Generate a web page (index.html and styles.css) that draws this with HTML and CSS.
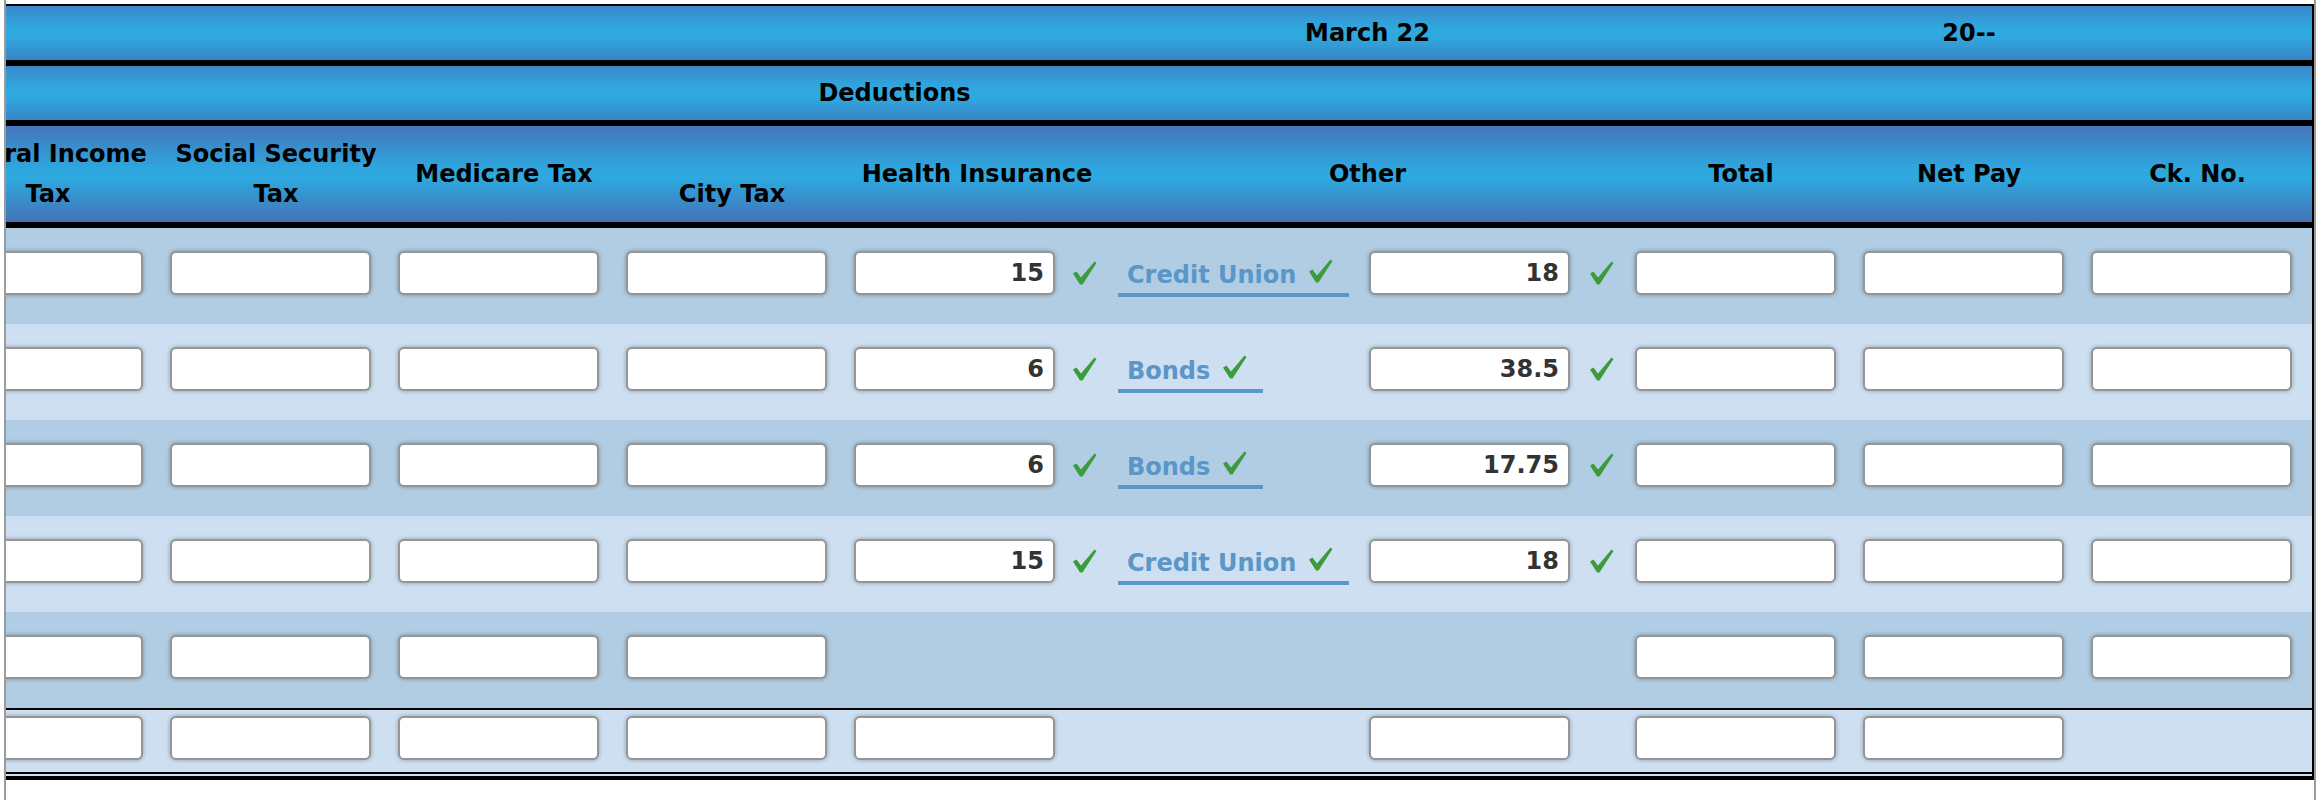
FILE: index.html
```html
<!DOCTYPE html>
<html lang="en">
<head>
<meta charset="utf-8">
<title>Payroll Register</title>
<link rel="stylesheet" href="styles.css">
</head>
<body>
<div class="frame">
  <div class="sheet">
    <div class="grid">
      <div class="row bar">
        <div class="bcell span-other">March 22</div>
        <div class="bcell span-net">20--</div>
      </div>
      <div class="row bar">
        <div class="bcell span-ded">Deductions</div>
      </div>
      <div class="row head">
        <div class="hcell"><div class="stack"><span class="line shift">Federal Income</span><span class="line">Tax</span></div></div>
        <div class="hcell">Social Security Tax</div>
        <div class="hcell">Medicare Tax</div>
        <div class="hcell"><span class="low">City Tax</span></div>
        <div class="hcell span-health">Health Insurance</div>
        <div class="hcell span-other">Other</div>
        <div class="hcell">Total</div>
        <div class="hcell">Net Pay</div>
        <div class="hcell">Ck. No.</div>
      </div>

      <div class="row body dark">
        <div class="cell"><input class="box" type="text" value=""></div>
        <div class="cell"><input class="box" type="text" value=""></div>
        <div class="cell"><input class="box" type="text" value=""></div>
        <div class="cell"><input class="box" type="text" value=""></div>
        <div class="cell"><input class="box" type="text" value="15"></div>
        <div class="cell chk1"><svg class="ck" viewBox="0 0 24 24" width="24" height="24"><path d="M0 12.5 L3.5 10.5 L8 16.5 L21.5 0.5 L23.5 2 L9.5 23.5 L7 23.5 Z"/></svg></div>
        <div class="cell lnk"><a class="link" href="#">Credit Union<svg class="ck in" viewBox="0 0 24 24" width="24" height="24"><path d="M0 12.5 L3.5 10.5 L8 16.5 L21.5 0.5 L23.5 2 L9.5 23.5 L7 23.5 Z"/></svg></a></div>
        <div class="cell"><input class="box" type="text" value="18"></div>
        <div class="cell chk2"><svg class="ck" viewBox="0 0 24 24" width="24" height="24"><path d="M0 12.5 L3.5 10.5 L8 16.5 L21.5 0.5 L23.5 2 L9.5 23.5 L7 23.5 Z"/></svg></div>
        <div class="cell"><input class="box" type="text" value=""></div>
        <div class="cell"><input class="box" type="text" value=""></div>
        <div class="cell"><input class="box" type="text" value=""></div>
      </div>

      <div class="row body light">
        <div class="cell"><input class="box" type="text" value=""></div>
        <div class="cell"><input class="box" type="text" value=""></div>
        <div class="cell"><input class="box" type="text" value=""></div>
        <div class="cell"><input class="box" type="text" value=""></div>
        <div class="cell"><input class="box" type="text" value="6"></div>
        <div class="cell chk1"><svg class="ck" viewBox="0 0 24 24" width="24" height="24"><path d="M0 12.5 L3.5 10.5 L8 16.5 L21.5 0.5 L23.5 2 L9.5 23.5 L7 23.5 Z"/></svg></div>
        <div class="cell lnk"><a class="link" href="#">Bonds<svg class="ck in" viewBox="0 0 24 24" width="24" height="24"><path d="M0 12.5 L3.5 10.5 L8 16.5 L21.5 0.5 L23.5 2 L9.5 23.5 L7 23.5 Z"/></svg></a></div>
        <div class="cell"><input class="box" type="text" value="38.5"></div>
        <div class="cell chk2"><svg class="ck" viewBox="0 0 24 24" width="24" height="24"><path d="M0 12.5 L3.5 10.5 L8 16.5 L21.5 0.5 L23.5 2 L9.5 23.5 L7 23.5 Z"/></svg></div>
        <div class="cell"><input class="box" type="text" value=""></div>
        <div class="cell"><input class="box" type="text" value=""></div>
        <div class="cell"><input class="box" type="text" value=""></div>
      </div>

      <div class="row body dark">
        <div class="cell"><input class="box" type="text" value=""></div>
        <div class="cell"><input class="box" type="text" value=""></div>
        <div class="cell"><input class="box" type="text" value=""></div>
        <div class="cell"><input class="box" type="text" value=""></div>
        <div class="cell"><input class="box" type="text" value="6"></div>
        <div class="cell chk1"><svg class="ck" viewBox="0 0 24 24" width="24" height="24"><path d="M0 12.5 L3.5 10.5 L8 16.5 L21.5 0.5 L23.5 2 L9.5 23.5 L7 23.5 Z"/></svg></div>
        <div class="cell lnk"><a class="link" href="#">Bonds<svg class="ck in" viewBox="0 0 24 24" width="24" height="24"><path d="M0 12.5 L3.5 10.5 L8 16.5 L21.5 0.5 L23.5 2 L9.5 23.5 L7 23.5 Z"/></svg></a></div>
        <div class="cell"><input class="box" type="text" value="17.75"></div>
        <div class="cell chk2"><svg class="ck" viewBox="0 0 24 24" width="24" height="24"><path d="M0 12.5 L3.5 10.5 L8 16.5 L21.5 0.5 L23.5 2 L9.5 23.5 L7 23.5 Z"/></svg></div>
        <div class="cell"><input class="box" type="text" value=""></div>
        <div class="cell"><input class="box" type="text" value=""></div>
        <div class="cell"><input class="box" type="text" value=""></div>
      </div>

      <div class="row body light">
        <div class="cell"><input class="box" type="text" value=""></div>
        <div class="cell"><input class="box" type="text" value=""></div>
        <div class="cell"><input class="box" type="text" value=""></div>
        <div class="cell"><input class="box" type="text" value=""></div>
        <div class="cell"><input class="box" type="text" value="15"></div>
        <div class="cell chk1"><svg class="ck" viewBox="0 0 24 24" width="24" height="24"><path d="M0 12.5 L3.5 10.5 L8 16.5 L21.5 0.5 L23.5 2 L9.5 23.5 L7 23.5 Z"/></svg></div>
        <div class="cell lnk"><a class="link" href="#">Credit Union<svg class="ck in" viewBox="0 0 24 24" width="24" height="24"><path d="M0 12.5 L3.5 10.5 L8 16.5 L21.5 0.5 L23.5 2 L9.5 23.5 L7 23.5 Z"/></svg></a></div>
        <div class="cell"><input class="box" type="text" value="18"></div>
        <div class="cell chk2"><svg class="ck" viewBox="0 0 24 24" width="24" height="24"><path d="M0 12.5 L3.5 10.5 L8 16.5 L21.5 0.5 L23.5 2 L9.5 23.5 L7 23.5 Z"/></svg></div>
        <div class="cell"><input class="box" type="text" value=""></div>
        <div class="cell"><input class="box" type="text" value=""></div>
        <div class="cell"><input class="box" type="text" value=""></div>
      </div>

      <div class="row body dark ruled">
        <div class="cell"><input class="box" type="text" value=""></div>
        <div class="cell"><input class="box" type="text" value=""></div>
        <div class="cell"><input class="box" type="text" value=""></div>
        <div class="cell"><input class="box" type="text" value=""></div>
        <div class="cell"></div>
        <div class="cell"></div>
        <div class="cell"></div>
        <div class="cell"></div>
        <div class="cell"></div>
        <div class="cell"><input class="box" type="text" value=""></div>
        <div class="cell"><input class="box" type="text" value=""></div>
        <div class="cell"><input class="box" type="text" value=""></div>
      </div>

      <div class="row body light totals">
        <div class="cell"><input class="box" type="text" value=""></div>
        <div class="cell"><input class="box" type="text" value=""></div>
        <div class="cell"><input class="box" type="text" value=""></div>
        <div class="cell"><input class="box" type="text" value=""></div>
        <div class="cell"><input class="box" type="text" value=""></div>
        <div class="cell"></div>
        <div class="cell"></div>
        <div class="cell"><input class="box" type="text" value=""></div>
        <div class="cell"></div>
        <div class="cell"><input class="box" type="text" value=""></div>
        <div class="cell"><input class="box" type="text" value=""></div>
        <div class="cell"></div>
      </div>
    </div>
  </div>
</div>
</body>
</html>
```

FILE: styles.css
```css
* {
  box-sizing: border-box;
}

html, body {
  margin: 0;
  padding: 0;
  background: #ffffff;
}

body {
  font-family: "DejaVu Sans", Verdana, sans-serif;
  font-weight: bold;
  font-size: 24px;
  color: #000;
}

.frame {
  margin-left: 4px;
  border-left: 2px solid #9b9b9b;
  border-right: 2px solid #9b9b9b;
  min-height: 800px;
  padding-top: 4px;
}

.sheet {
  border-top: 2px solid #000;
  border-right: 2px solid #000;
  border-bottom: 4px solid #000;
  padding-bottom: 2px;
  background: #cddff0;
  overflow: hidden;
}

.grid {
  margin-left: -72px;
  width: 2378px;
}

.row {
  display: grid;
  grid-template-columns: 228px 228px 228px 228px 216px 46px 253px 219px 47px 228px 228px 229px;
}

.bar {
  height: 60px;
  border-bottom: 6px solid #000;
  background: linear-gradient(180deg, #3a88ca 0%, #2fa9e0 42%, #2fa9e0 58%, #3984c6 100%);
}

.head {
  height: 102px;
  border-bottom: 6px solid #000;
  background: linear-gradient(180deg, #4475ba 0%, #2ea8df 45%, #2ea8df 55%, #4472b6 100%);
}

.bcell {
  display: flex;
  align-items: center;
  justify-content: center;
  line-height: 28px;
  white-space: nowrap;
}

.span-other {
  grid-column: 7 / 10;
}

.span-net {
  grid-column: 11 / 12;
}

.span-ded {
  grid-column: 1 / 11;
}

.span-health {
  grid-column: 5 / 7;
}

.hcell {
  display: flex;
  align-items: center;
  justify-content: center;
  text-align: center;
  line-height: 40px;
}

.stack {
  display: flex;
  flex-direction: column;
  align-items: center;
}

.line {
  white-space: nowrap;
}

.line.shift {
  padding-right: 10px;
}

.low {
  padding-top: 40px;
}

.body {
  height: 96px;
}

.dark {
  background: #b0cde3;
}

.light {
  background: #cddff0;
}

.ruled {
  height: 98px;
  border-bottom: 2px solid #000;
}

.totals {
  height: 64px;
  border-bottom: 2px solid #000;
}

.cell {
  display: flex;
  align-items: center;
  padding-left: 8px;
  padding-bottom: 6px;
}

.box {
  width: 201px;
  height: 44px;
  margin: 0;
  padding: 0 9px 0 4px;
  border: 2px solid #959595;
  border-radius: 6px;
  background: #fff;
  box-shadow: 0 0 4px rgba(0, 0, 0, 0.3);
  font: inherit;
  color: #333;
  text-align: right;
  outline: none;
}

.chk1 {
  padding-left: 11px;
}

.chk2 {
  padding-left: 10px;
}

.ck {
  display: block;
  fill: #3c9c3c;
}

.lnk {
  align-items: flex-start;
  padding-top: 31px;
  padding-left: 10px;
  padding-bottom: 0;
}

.link {
  display: inline-block;
  padding: 0 16px 4px 9px;
  line-height: 28px;
  color: #5a96c8;
  text-decoration: none;
  border-bottom: 4px solid #5a96c8;
  white-space: nowrap;
}

.ck.in {
  display: inline-block;
  vertical-align: baseline;
  margin-left: 13px;
}
```
